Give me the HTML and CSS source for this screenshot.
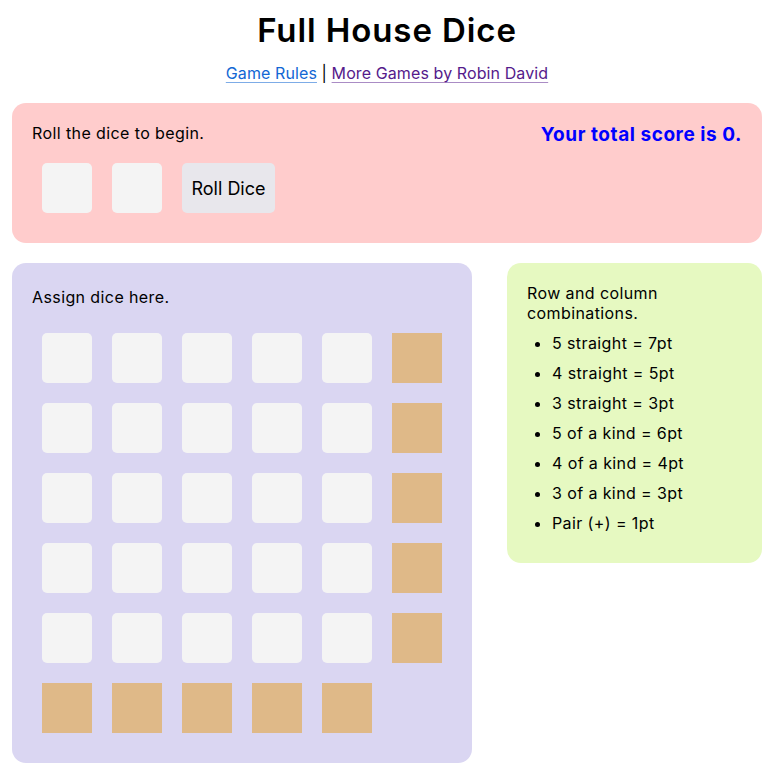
FILE: index.html
```html
<!DOCTYPE html>
<html>
<head>
<meta charset="utf-8">
<title>Full House Dice</title>
<link rel="stylesheet" href="styles.css">
</head>
<body>
<header class="header">
  <h1 class="title">Full House Dice</h1>
  <div class="links"><a class="link" href="#rules">Game Rules</a> | <a class="link visited" href="#games">More Games by Robin David</a></div>
</header>

<section class="panel roll-panel">
  <div class="roll-top">
    <p class="msg">Roll the dice to begin.</p>
    <p class="score">Your total score is 0.</p>
  </div>
  <div class="dice-row">
    <div class="die"></div>
    <div class="die"></div>
    <button class="roll-btn">Roll Dice</button>
  </div>
</section>

<div class="lower">
  <section class="panel board-panel">
    <p class="msg board-msg">Assign dice here.</p>
    <div class="board">
      <div class="cell"></div><div class="cell"></div><div class="cell"></div><div class="cell"></div><div class="cell"></div><div class="cell sum"></div>
      <div class="cell"></div><div class="cell"></div><div class="cell"></div><div class="cell"></div><div class="cell"></div><div class="cell sum"></div>
      <div class="cell"></div><div class="cell"></div><div class="cell"></div><div class="cell"></div><div class="cell"></div><div class="cell sum"></div>
      <div class="cell"></div><div class="cell"></div><div class="cell"></div><div class="cell"></div><div class="cell"></div><div class="cell sum"></div>
      <div class="cell"></div><div class="cell"></div><div class="cell"></div><div class="cell"></div><div class="cell"></div><div class="cell sum"></div>
      <div class="cell sum"></div><div class="cell sum"></div><div class="cell sum"></div><div class="cell sum"></div><div class="cell sum"></div><div class="cell empty"></div>
    </div>
  </section>

  <section class="panel rules-panel">
    <p class="msg">Row and column combinations.</p>
    <ul class="rules">
      <li>5 straight = 7pt</li>
      <li>4 straight = 5pt</li>
      <li>3 straight = 3pt</li>
      <li>5 of a kind = 6pt</li>
      <li>4 of a kind = 4pt</li>
      <li>3 of a kind = 3pt</li>
      <li>Pair (+) = 1pt</li>
    </ul>
  </section>
</div>
</body>
</html>
```

FILE: styles.css
```css
* { box-sizing: border-box; }

body {
  margin: 0;
  padding: 0 16px 0 12px;
  font-family: "Inter", "Noto Sans", sans-serif;
  font-size: 16px;
  line-height: 20px;
  letter-spacing: 0.4px;
  color: #000;
  background: #fff;
}

.header {
  text-align: center;
  padding-top: 10px;
}

.title {
  margin: 0;
  font-size: 33px;
  line-height: 40px;
  font-weight: 600;
  letter-spacing: 0.9px;
}

.links {
  margin-top: 13px;
  line-height: 20px;
  letter-spacing: 0.1px;
}

.link {
  color: #1267d4;
  text-decoration-color: rgba(18, 103, 212, 0.55);
  text-underline-offset: 3px;
}

.link.visited {
  color: #551a8b;
  text-decoration-color: rgba(85, 26, 139, 0.5);
}

.panel {
  border-radius: 14px;
  padding: 20px;
}

.roll-panel {
  margin-top: 20px;
  background: #ffcccc;
}

.roll-top {
  display: flex;
  justify-content: space-between;
  align-items: flex-start;
  height: 30px;
}

.msg {
  margin: 0;
  line-height: 20px;
}

.score {
  margin: 0;
  color: #0000ff;
  font-weight: 700;
  font-size: 19px;
  line-height: 20px;
  letter-spacing: 0.55px;
  padding-top: 2px;
}

.dice-row {
  display: flex;
  align-items: center;
}

.die {
  width: 50px;
  height: 50px;
  margin: 10px;
  background: #f4f4f4;
  border-radius: 5px;
}

.roll-btn {
  margin: 10px;
  height: 50px;
  width: 93px;
  padding: 0;
  border: none;
  border-radius: 5px;
  background: #e8e7ec;
  font-family: inherit;
  font-size: 18px;
  letter-spacing: 0;
  color: #000;
}

.lower {
  margin-top: 20px;
  display: grid;
  grid-template-columns: 460px 1fr;
  column-gap: 35px;
  align-items: start;
}

.board-panel {
  background: #dad6f2;
}

.board-msg {
  padding-top: 4px;
}

.board {
  margin-top: 16px;
  display: grid;
  grid-template-columns: repeat(6, 70px);
  grid-auto-rows: 70px;
}

.cell {
  margin: 10px;
  background: #f4f4f4;
  border-radius: 5px;
}

.cell.sum {
  background: #dfb988;
  border-radius: 0;
}

.cell.empty {
  background: transparent;
}

.rules-panel {
  background: #e6f9c1;
}

.rules {
  margin: 0;
  padding-left: 25px;
}

.rules li {
  margin: 10px 0;
  line-height: 20px;
}
```
